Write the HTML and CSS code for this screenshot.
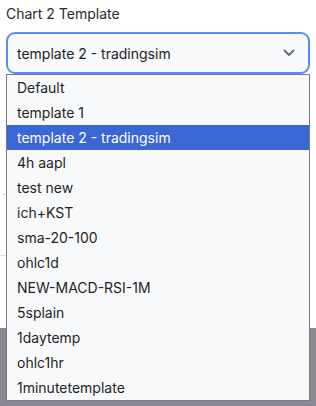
FILE: index.html
```html
<!DOCTYPE html>
<html lang="en">
<head>
    <meta charset="UTF-8">
    <meta name="viewport" content="width=device-width, initial-scale=1.0">
    <title>Chart 2 Template</title>
    <link rel="stylesheet" href="styles.css">
</head>
<body>
    <div class="page">
        <div class="panel">
            <div class="field">
                <label class="field-label">Chart 2 Template</label>
                <div class="select">
                    <span class="select-value">template 2 - tradingsim</span>
                    <svg class="chevron" width="12" height="8" viewBox="0 0 12 8">
                        <path d="M1.5 1.5 L6 6 L10.5 1.5" fill="none" stroke="#6b6f76" stroke-width="2" stroke-linecap="round" stroke-linejoin="round"/>
                    </svg>
                </div>
            </div>
            <div class="behind">
                <div class="behind-dots">.:</div>
                <div class="behind-rule"></div>
            </div>
        </div>
        <div class="footer"></div>

        <ul class="options">
            <li>Default</li>
            <li>template 1</li>
            <li class="selected">template 2 - tradingsim</li>
            <li>4h aapl</li>
            <li>test new</li>
            <li>ich+KST</li>
            <li>sma-20-100</li>
            <li>ohlc1d</li>
            <li>NEW-MACD-RSI-1M</li>
            <li>5splain</li>
            <li>1daytemp</li>
            <li>ohlc1hr</li>
            <li>1minutetemplate</li>
        </ul>
    </div>
</body>
</html>
```

FILE: styles.css
```css
body {
    margin: 0;
    background-color: white;
    font-family: 'Inter', 'Noto Sans', sans-serif;
    color: #222;
}

.page {
    position: relative;
    height: 406px;
    display: flex;
    flex-direction: column;
}

.panel {
    height: 328px;
    background: white;
    padding: 4px 6px 0;
    box-sizing: border-box;
}

.footer {
    flex: 1;
    background-color: #898a91;
}

.field-label {
    display: block;
    font-size: 14px;
    line-height: 20px;
    color: #2b2b2b;
    margin-bottom: 8px;
}

.select {
    display: flex;
    align-items: center;
    justify-content: space-between;
    height: 42px;
    box-sizing: border-box;
    padding: 0 12px 0 9px;
    border: 2px solid #5b8cf0;
    border-radius: 9px;
    background-color: #f8f9fb;
    font-size: 14px;
}

.chevron {
    margin-right: 1px;
}

.behind {
    position: relative;
    height: 250px;
}

.behind-dots {
    position: absolute;
    left: -3px;
    top: 112px;
    font-size: 9px;
    color: #999;
}

.behind-rule {
    position: absolute;
    left: -6px;
    top: 181px;
    width: 20px;
    border-top: 1px solid #ddd;
}

/* open list */
.options {
    position: absolute;
    top: 74px;
    left: 6px;
    z-index: 2;
    width: 304px;
    box-sizing: border-box;
    margin: 0;
    padding: 0;
    list-style: none;
    background-color: #f8f9fb;
    border: 1px solid #7a7a7a;
    font-size: 14px;
}

.options li {
    height: 25px;
    line-height: 25px;
    padding-left: 10px;
    color: #1f1f1f;
}

.options li.selected {
    background-color: #3a67d5;
    color: white;
}
```
